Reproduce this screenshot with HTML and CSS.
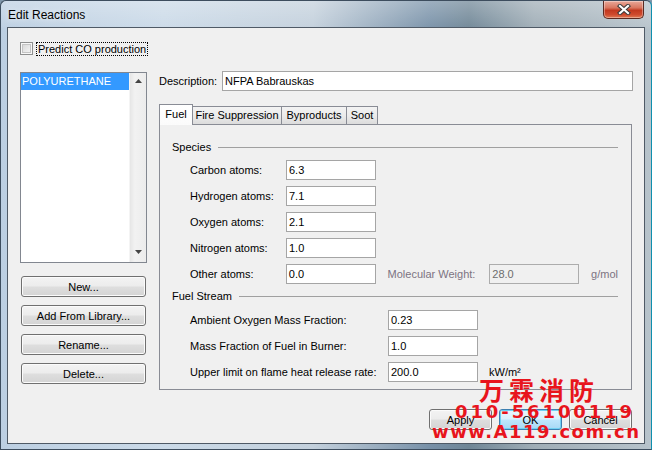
FILE: index.html
```html
<!DOCTYPE html>
<html lang="en">
<head>
<meta charset="utf-8">
<title>Edit Reactions</title>
<link rel="stylesheet" href="styles.css">
</head>
<body>
<div class="window">
  <div class="titlebar">
    <span class="title">Edit Reactions</span>
    <button class="close-btn" aria-label="Close">
      <svg width="14" height="11" viewBox="0 0 14 11">
        <path d="M3 2 L11 9 M11 2 L3 9" stroke="#3a3a3a" stroke-width="4.2" stroke-linecap="square" fill="none"/>
        <path d="M3 2 L11 9 M11 2 L3 9" stroke="#ffffff" stroke-width="2.2" stroke-linecap="square" fill="none"/>
      </svg>
    </button>
  </div>
  <div class="client">
    <div class="top-row">
      <span class="checkbox"></span>
      <span class="focus-text">Predict CO production</span>
    </div>
    <div class="main">
      <div class="left-col">
        <div class="listbox">
          <div class="list-items">
            <div class="list-item selected">POLYURETHANE</div>
          </div>
          <div class="vscroll">
            <svg class="arrow" width="7" height="4" viewBox="0 0 7 4"><polygon points="3.5,0 7,4 0,4" fill="#444"/></svg>
            <svg class="arrow" width="7" height="4" viewBox="0 0 7 4"><polygon points="0,0 7,0 3.5,4" fill="#444"/></svg>
          </div>
        </div>
        <div class="btn-col">
          <button class="btn side-btn">New...</button>
          <button class="btn side-btn">Add From Library...</button>
          <button class="btn side-btn">Rename...</button>
          <button class="btn side-btn">Delete...</button>
        </div>
      </div>
      <div class="right-col">
        <div class="desc-row">
          <span class="desc-label">Description:</span>
          <div class="input desc-input">NFPA Babrauskas</div>
        </div>
        <div class="tabstrip">
          <div class="tab active tab-fuel">Fuel</div>
          <div class="tab tab-fire">Fire Suppression</div>
          <div class="tab tab-byp">Byproducts</div>
          <div class="tab tab-soot">Soot</div>
        </div>
        <div class="panel">
          <div class="group-head"><span>Species</span><span class="rule"></span></div>
          <div class="species">
            <div class="row"><span class="lbl lbl-sp">Carbon atoms:</span><div class="input field">6.3</div></div>
            <div class="row"><span class="lbl lbl-sp">Hydrogen atoms:</span><div class="input field">7.1</div></div>
            <div class="row"><span class="lbl lbl-sp">Oxygen atoms:</span><div class="input field">2.1</div></div>
            <div class="row"><span class="lbl lbl-sp">Nitrogen atoms:</span><div class="input field">1.0</div></div>
            <div class="row">
              <span class="lbl lbl-sp">Other atoms:</span><div class="input field">0.0</div>
              <span class="lbl lbl-mw disabled">Molecular Weight:</span><div class="input field input-disabled">28.0</div>
              <span class="unit disabled">g/mol</span>
            </div>
          </div>
          <div class="group-head stream-head"><span>Fuel Stream</span><span class="rule"></span></div>
          <div class="stream">
            <div class="row"><span class="lbl lbl-fs">Ambient Oxygen Mass Fraction:</span><div class="input field">0.23</div></div>
            <div class="row"><span class="lbl lbl-fs">Mass Fraction of Fuel in Burner:</span><div class="input field">1.0</div></div>
            <div class="row"><span class="lbl lbl-fs">Upper limit on flame heat release rate:</span><div class="input field">200.0</div><span class="unit unit-kw">kW/m²</span></div>
          </div>
        </div>
      </div>
    </div>
    <div class="footer">
      <button class="btn foot-btn">Apply</button>
      <button class="btn foot-btn default">OK</button>
      <button class="btn foot-btn">Cancel</button>
    </div>
  </div>
</div>
<div class="watermark">
  <div class="wm-cn">万霖消防</div>
  <div class="wm-tel">010-56100119</div>
  <div class="wm-url">www.A119.com.cn</div>
</div>
</body>
</html>
```
FILE: styles.css
```css
* { box-sizing: border-box; }
html, body { margin: 0; padding: 0; }
body {
  position: relative;
  width: 652px;
  height: 450px;
  overflow: hidden;
  font-family: "Liberation Sans", Arial, sans-serif;
  font-size: 11px;
  color: #000;
  background: #7f96aa;
}

/* ---------- window frame ---------- */
.window {
  width: 652px;
  height: 450px;
  display: flex;
  flex-direction: column;
  border: 1px solid #3d4d5e;
  border-right-color: #0f8fae;
  border-radius: 6px 6px 0 0;
  background:
    linear-gradient(180deg, rgba(255,255,255,0.28) 0px, rgba(255,255,255,0.05) 26px, rgba(255,255,255,0) 27px),
    linear-gradient(90deg, #bccfe2 0%, #cbdae8 25%, #c3d0dc 48%, #7891a8 66%, #6f8696 72%, #9fadb6 82%, #b7c3cb 100%);
}
.titlebar {
  height: 26px;
  display: flex;
  align-items: flex-start;
  padding-left: 7px;
}
.title {
  font-size: 12px;
  line-height: 14px;
  padding-top: 7px;
  color: #000;
  text-shadow: 0 0 6px rgba(255,255,255,0.9);
}
.close-btn {
  margin-left: auto;
  margin-right: 7px;
  width: 41px;
  height: 18px;
  padding: 0;
  border: 1px solid #5b2a22;
  border-top: none;
  border-radius: 0 0 5px 5px;
  background: linear-gradient(180deg, #e9a99a 0%, #d9765f 40%, #c2381f 55%, #cf4a2e 80%, #e07a55 100%);
  box-shadow: inset 0 0 0 1px rgba(255,255,255,0.35);
  display: flex;
  align-items: center;
  justify-content: center;
}
.close-btn svg { display: block; }

/* ---------- client area ---------- */
.client {
  flex: 1;
  margin: 0 6px 5px 6px;
  border: 1px solid #4f5a66;
  background: #f0f0f0;
  padding: 14px 11px 0 12px;
  display: flex;
  flex-direction: column;
}
.top-row {
  height: 14px;
  display: flex;
  align-items: flex-start;
}
.checkbox {
  width: 13px;
  height: 13px;
  border: 1px solid #8e8f8f;
  background: linear-gradient(135deg, #d2d2d2 0%, #eeeeee 70%, #f6f6f6 100%);
  box-shadow: inset 0 0 0 1px #f7f7f7, inset 0 0 0 2px #c4c4c4;
}
.focus-text {
  margin-left: 3px;
  height: 14px;
  line-height: 12px;
  padding: 0 1px;
  border: 1px dotted #000;
}

.main {
  margin-top: 15px;
  display: flex;
  align-items: flex-start;
}
.left-col {
  width: 127px;
  margin-top: 1px;
}
.listbox {
  height: 191px;
  border: 1px solid #828790;
  background: #fff;
  display: flex;
}
.list-items { flex: 1; }
.list-item {
  height: 17px;
  line-height: 17px;
  padding-left: 1px;
}
.list-item.selected { background: #3399ff; color: #fff; }
.vscroll {
  width: 17px;
  background: linear-gradient(90deg, #e6e6e6 0%, #f2f2f2 30%, #ececec 100%);
  border-left: 1px solid #f4f4f4;
  display: flex;
  flex-direction: column;
  justify-content: space-between;
  align-items: center;
  padding: 6px 0 8px;
}
.arrow { display: block; }

.btn {
  font-family: inherit;
  font-size: 11px;
  color: #000;
  padding: 0;
  border: 1px solid #707070;
  border-radius: 3px;
  background: linear-gradient(180deg, #f3f3f3 0%, #ececec 48%, #dedede 52%, #d4d4d4 100%);
  box-shadow: inset 0 0 0 1px #fbfbfb;
}
.btn-col {
  margin-top: 13px;
  display: flex;
  flex-direction: column;
  gap: 8px;
  padding-left: 1px;
}
.side-btn { width: 125px; height: 21px; }

.right-col {
  margin-left: 11px;
  width: 475px;
}
.desc-row {
  height: 20px;
  display: flex;
  align-items: center;
}
.desc-label { width: 64px; padding-left: 1px; }
.input {
  height: 20px;
  border: 1px solid #a5a5a5;
  background: #fff;
  padding-left: 2px;
  line-height: 18px;
  white-space: nowrap;
}
.desc-input { width: 411px; }

.tabstrip {
  margin-top: 13px;
  margin-left: 1px;
  height: 20px;
  display: flex;
  align-items: flex-end;
}
.tab {
  height: 18px;
  line-height: 16px;
  text-align: center;
  border: 1px solid #898c95;
  border-bottom: none;
  border-left: none;
  background: linear-gradient(180deg, #f3f3f3 0%, #ebebeb 50%, #dcdcdc 100%);
}
.tab.active {
  height: 21px;
  margin-bottom: -1px;
  line-height: 19px;
  border-left: 1px solid #898c95;
  background: linear-gradient(180deg, #ffffff 0%, #fbfbfb 100%);
  position: relative;
  z-index: 1;
}
.tab-fuel { width: 34px; }
.tab-fire { width: 89px; }
.tab-byp { width: 65px; }
.tab-soot { width: 31px; }

.panel {
  width: 473px;
  height: 266px;
  margin-left: 1px;
  border: 1px solid #898c95;
  background: #f0f0f0;
  padding: 16px 13px 0 12px;
}
.group-head {
  height: 13px;
  line-height: 13px;
  display: flex;
  align-items: center;
  gap: 7px;
}
.rule {
  flex: 1;
  height: 1px;
  background: #a0a0a0;
}
.species {
  margin-top: 6px;
  display: flex;
  flex-direction: column;
  gap: 6px;
}
.row {
  height: 20px;
  display: flex;
  align-items: center;
  padding-left: 18px;
}
.lbl-sp { width: 96px; }
.lbl-fs { width: 198px; }
.field { width: 90px; }
.lbl-mw { width: 102px; margin-left: 12px; }
.unit { margin-left: 12px; }
.unit-kw { margin-left: 11px; }
.disabled { color: #7c7382; }
.input-disabled {
  background: #f0f0f0;
  border-color: #acacac;
  color: #6d6d6d;
}
.stream-head { margin-top: 6px; }
.stream {
  margin-top: 7px;
  display: flex;
  flex-direction: column;
  gap: 6px;
}

.footer {
  margin-top: 19px;
  padding-right: 1px;
  display: flex;
  justify-content: flex-end;
  gap: 7px;
}
.foot-btn { width: 63px; height: 21px; }
.btn.default {
  border-color: #3c7fb1;
  background: linear-gradient(180deg, #eaf6fd 0%, #d9f0fc 48%, #bee6fd 52%, #a7d9f5 100%);
  box-shadow: inset 0 0 0 1px #6fd0f3;
}

/* ---------- watermark overlay ---------- */
.watermark {
  position: absolute;
  left: 0;
  top: 0;
  color: #e8141c;
  font-weight: bold;
  pointer-events: none;
}
.wm-cn {
  position: absolute;
  left: 479px;
  top: 377px;
  font-family: "Noto Sans CJK SC", sans-serif;
  font-size: 25px;
  line-height: 25px;
  letter-spacing: 5px;
  white-space: nowrap;
}
.wm-tel {
  position: absolute;
  left: 455px;
  top: 403px;
  font-family: "DejaVu Sans", sans-serif;
  font-size: 18px;
  line-height: 18px;
  letter-spacing: 2.9px;
  white-space: nowrap;
}
.wm-url {
  position: absolute;
  left: 432px;
  top: 423px;
  font-family: "DejaVu Sans", sans-serif;
  font-size: 18px;
  line-height: 18px;
  letter-spacing: 1.5px;
  white-space: nowrap;
}
```
